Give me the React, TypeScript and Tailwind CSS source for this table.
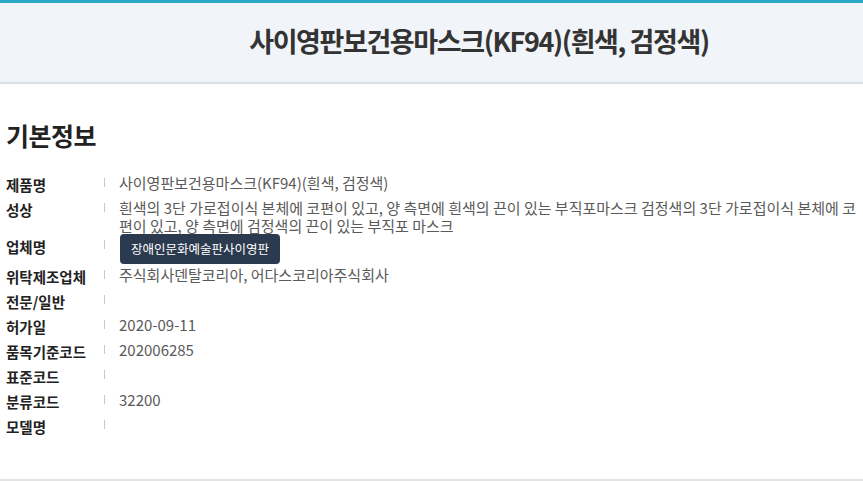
import React from "react";

type Row = { label: string; value?: React.ReactNode; badge?: string };

const rows: Row[] = [
  { label: "제품명", value: "사이영판보건용마스크(KF94)(흰색, 검정색)" },
  {
    label: "성상",
    value:
      "흰색의 3단 가로접이식 본체에 코편이 있고, 양 측면에 흰색의 끈이 있는 부직포마스크 검정색의 3단 가로접이식 본체에 코편이 있고, 양 측면에 검정색의 끈이 있는 부직포 마스크",
  },
  { label: "업체명", badge: "장애인문화예술판사이영판" },
  { label: "위탁제조업체", value: "주식회사덴탈코리아, 어다스코리아주식회사" },
  { label: "전문/일반" },
  { label: "허가일", value: "2020-09-11" },
  { label: "품목기준코드", value: "202006285" },
  { label: "표준코드" },
  { label: "분류코드", value: "32200" },
  { label: "모델명" },
];

export default function App() {
  return (
    <div className="w-[863px] h-[481px] bg-white flex flex-col font-['Noto_Sans_CJK_KR','Noto_Sans',sans-serif] overflow-hidden">
      <header className="h-[84px] shrink-0 border-t-[3px] border-t-[#2aa8c5] border-b-2 border-b-[#dcdfe3] bg-[#f1f4f9] flex items-center justify-center pl-[95px] pb-[5px]">
        <h1 className="text-[27px] font-bold tracking-[-1.4px] text-[#333] leading-none">
          사이영판보건용마스크(KF94)(흰색, 검정색)
        </h1>
      </header>
      <main className="flex-1 border-b-2 border-b-[#e3e3e3] px-[6px]">
        <h2 className="mt-[33px] text-[25px] font-bold text-[#222] leading-[36px] tracking-[-0.5px]">
          기본정보
        </h2>
        <dl className="mt-[19px] flex flex-col">
          {rows.map((r) => (
            <div key={r.label} className="flex items-start">
              <dt className="w-[98px] shrink-0 text-[14.5px] font-bold text-[#222] leading-[25px]">
                {r.label}
              </dt>
              <span className="w-px h-[9px] mt-[6px] bg-[#c8c8c8] shrink-0" />
              <dd className="ml-[14px] flex-1 min-w-0">
                {r.badge ? (
                  <span className="inline-block h-[30px] px-[11px] rounded-[4px] bg-[#2c3a4f] text-white text-[12.5px] leading-[30px] ml-px">
                    {r.badge}
                  </span>
                ) : (
                  <p className="pt-[2px] text-[15px] leading-[17.5px] text-[#5a5a5a] break-all">
                    {r.value}
                  </p>
                )}
              </dd>
            </div>
          ))}
        </dl>
      </main>
    </div>
  );
}
